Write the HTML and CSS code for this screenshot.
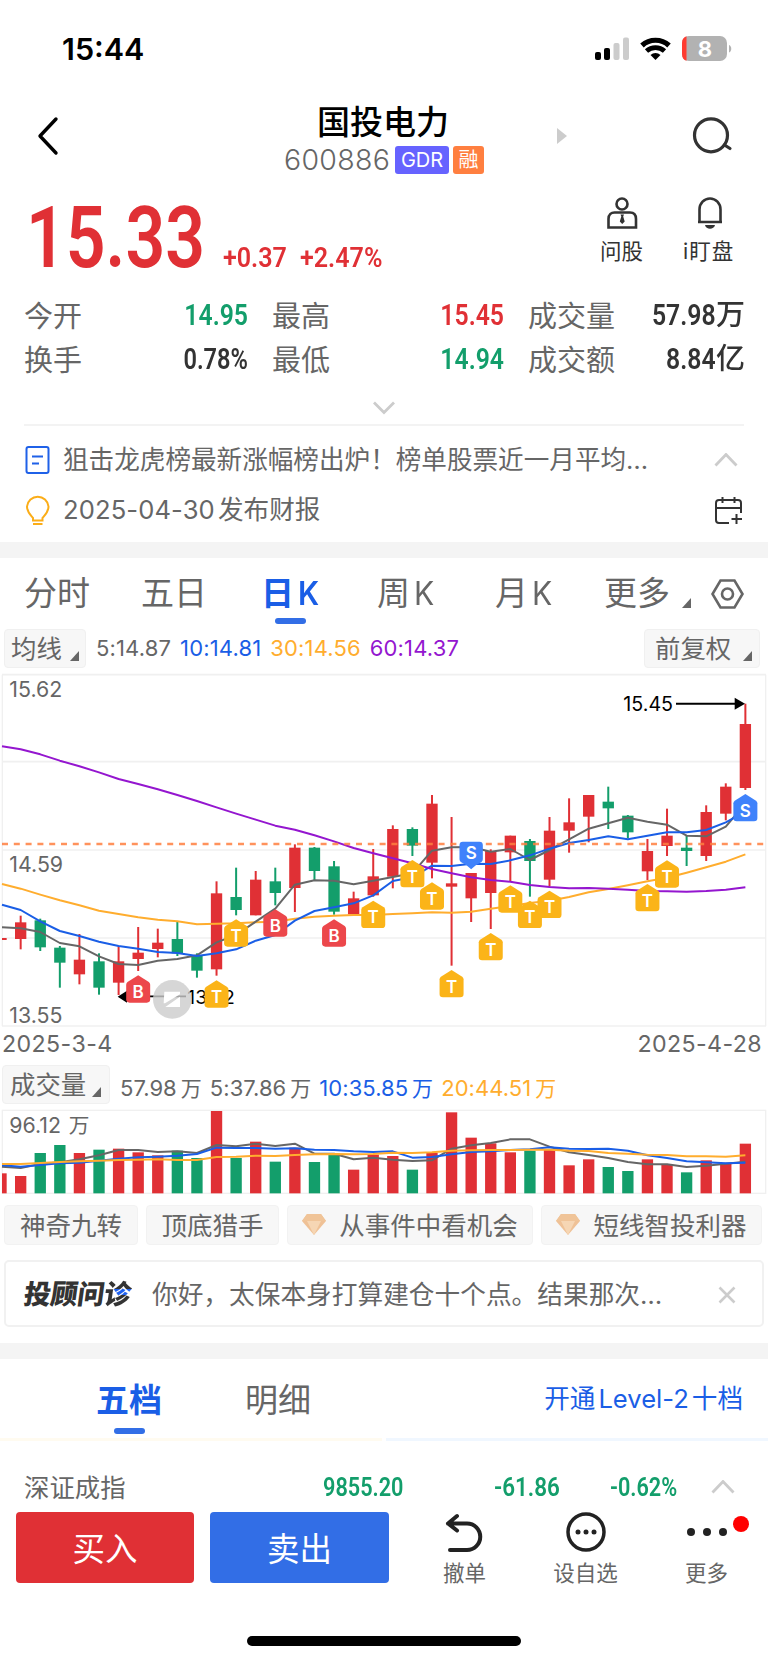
FILE: index.html
```
<!DOCTYPE html>
<html lang="zh-CN">
<head>
    <meta charset="UTF-8">
    <meta name="viewport" content="width=device-width, initial-scale=1.0">
    <title>国投电力 600886</title>
    <link rel="stylesheet" href="styles.css">
</head>
<body>
    <div class="status-bar">
        <span class="clock">15:44</span>
        <svg class="status-icons" width="140" height="44" viewBox="0 0 140 44">
            <rect x="0" y="27" width="6" height="8" rx="2"/>
            <rect x="9" y="23" width="6" height="12" rx="2"/>
            <rect x="18.500" y="18" width="6" height="17" rx="2" fill="#ccc"/>
            <rect x="28" y="12.500" width="6" height="22.500" rx="2" fill="#ccc"/>
            <path d="M47 20.500a20 20 0 0 1 27 0" fill="none" stroke="#000" stroke-width="5.200"/>
            <path d="M51.500 26a13.500 13.500 0 0 1 18 0" fill="none" stroke="#000" stroke-width="4.800"/>
            <path d="M60.500 35l-5-5a7.400 7.400 0 0 1 10 0z"/>
            <rect x="87" y="11" width="45" height="25" rx="7" fill="#b2b2b2"/>
            <path d="M91.500 11.200v24.600C88.500 35 87 32.500 87 29V18c0-3.500 1.500-6 4.500-6.800z" fill="#ff3b30"/>
            <path d="M134 20c3 1 3 6.500 0 7.500z" fill="#b2b2b2"/>
            <text x="110" y="31.500" class="battery-text">8</text>
        </svg>
    </div>

    <header class="header">
        <svg class="back" width="24" height="40" viewBox="0 0 24 40"><path d="M20 3L4 20l16 17"/></svg>
        <div class="stock">
            <h1>国投电力</h1>
            <div class="code-row">
                <span class="code">600886</span>
                <span class="tag gdr">GDR</span>
                <span class="tag rong">融</span>
            </div>
        </div>
        <svg class="next" width="10" height="16" viewBox="0 0 10 16"><path d="M0 0l10 8-10 8z"/></svg>
        <svg class="search" width="44" height="40" viewBox="0 0 44 40"><circle cx="20" cy="20.300" r="16.500"/><path d="M33.500 30l5.500 3.500"/></svg>
    </header>

    <section class="price-row">
        <div class="price"><span class="din">15.33</span></div>
        <div class="change"><span class="din">+0.37</span></div>
        <div class="change-pct"><span class="din">+2.47%</span></div>
        <div class="quick ask">
            <svg width="32" height="34" viewBox="0 0 32 34"><circle cx="16" cy="8" r="5.500"/><path d="M2.500 31.500V23c0-5 3-6.500 6-6.500h15.500c3 0 6 1.500 6 6.500v8.500z"/><path class="solid" d="M14.500 18.500h3.500l-.8 2 1.500 5L16.200 28l-2.400-2.500 1.500-5z"/></svg>
            <span>问股</span>
        </div>
        <div class="quick watch">
            <svg width="32" height="34" viewBox="0 0 32 34"><path d="M6.500 26V13.500a10.500 11 0 0 1 21 0V26zM5 26h24"/><path class="solid" d="M12 29h10c-1 5-9 5-10 0z"/></svg>
            <span>i盯盘</span>
        </div>
    </section>

    <section class="quotes">
        <span class="label">今开</span><b class="din down">14.95</b>
        <span class="label">最高</span><b class="din up">15.45</b>
        <span class="label">成交量</span><b class="din">57.98<i>万</i></b>
        <span class="label">换手</span><b class="din pct">0.78%</b>
        <span class="label">最低</span><b class="din down">14.94</b>
        <span class="label">成交额</span><b class="din">8.84<i>亿</i></b>
    </section>
    <div class="expand">
        <svg class="chevron" width="24" height="14" viewBox="0 0 24 14"><path d="M2 1.500l10 10 10-10"/></svg>
    </div>

    <section class="news">
        <div class="news-row">
            <svg width="26" height="30" viewBox="0 0 26 30"><g fill="none" stroke="#1f61e8" stroke-width="2"><rect x="2.500" y="2" width="22" height="26" rx="2"/><path d="M8 11.500h11M8 18.500h7"/></g></svg>
            <p class="news-text">狙击龙虎榜最新涨幅榜出炉！榜单股票近一月平均…</p>
            <svg class="chevron" width="24" height="14" viewBox="0 0 24 14"><path d="M1.500 12.500l10.500-11 10.500 11"/></svg>
        </div>
        <div class="news-row">
            <svg width="26" height="32" viewBox="0 0 26 32"><g fill="none" stroke="#fbad18" stroke-width="2"><path d="M9 26.500V24c-2.500-3-6-6-6-11.500a10.800 10.800 0 0 1 21.500 0C24.500 18 21 21 18.500 24v2.500zM9 30h9.500"/></g></svg>
            <p class="news-text"><span class="date">2025-04-30</span> 发布财报</p>
            <svg width="30" height="30" viewBox="0 0 30 30"><g fill="none" stroke="#333" stroke-width="2"><path d="M15 28H5a3 3 0 0 1-3-3V8a3 3 0 0 1 3-3h19a3 3 0 0 1 3 3v10M2 13h25M8.500 2v6M20.500 2v6M22.500 19v10M17.500 24h10.500"/></g></svg>
        </div>
    </section>
    <div class="band"></div>

    <nav class="periods">
        <span>分时</span>
        <span>五日</span>
        <span class="active">日<i>K</i></span>
        <span>周<i>K</i></span>
        <span>月<i>K</i></span>
        <span class="more">更多</span>
        <svg width="36" height="32" viewBox="0 0 36 32"><g fill="none" stroke="#666" stroke-width="2.600"><path d="M9.500 2.500h14L31.500 16l-8 13.500h-14L1.500 16z"/><circle cx="16.500" cy="16" r="5.500"/></g></svg>
    </nav>

    <section class="indicator">
        <span class="select ma">均线</span>
        <div class="values">
            <span>5:14.87</span><span class="blue">10:14.81</span><span class="orange">30:14.56</span><span class="purple">60:14.37</span>
        </div>
        <span class="select adjust">前复权</span>
    </section>

    <svg id="kline" class="kline" viewBox="0 0 2304 1080"></svg>
    <div class="dates"><span>2025-3-4</span><span>2025-4-28</span></div>

    <section class="indicator volume">
        <span class="select vol">成交量</span>
        <div class="values">
            <span>57.98<i>万</i></span><span>5:37.86<i>万</i></span><span class="blue">10:35.85<i>万</i></span><span class="orange">20:44.51<i>万</i></span>
        </div>
    </section>
    <svg id="volume" class="volume-chart" viewBox="0 234 2304 264"></svg>

    <section class="chips">
        <span class="chip">神奇九转</span>
        <span class="chip">顶底猎手</span>
        <span class="chip gem">
            <svg width="24" height="22" viewBox="0 0 24 22"><path d="M5 1h14l5 7-12 14L0 8z" fill="#efc196"/><path d="M5 1h14l5 7H0z" fill="#f0c498"/><path d="M5 8h14l-7 14z" fill="#f6d6b4"/></svg>
            从事件中看机会
        </span>
        <span class="chip gem">
            <svg width="24" height="22" viewBox="0 0 24 22"><path d="M5 1h14l5 7-12 14L0 8z" fill="#efc196"/><path d="M5 1h14l5 7H0z" fill="#f0c498"/><path d="M5 8h14l-7 14z" fill="#f6d6b4"/></svg>
            短线智投利器
        </span>
    </section>

    <section class="advisor">
        <strong>投顾问<em>诊</em></strong>
        <p>你好，太保本身打算建仓十个点。结果那次…</p>
        <svg width="18" height="18" viewBox="0 0 18 18"><path d="M1.500 1.500l15 15M16.500 1.500l-15 15"/></svg>
    </section>
    <div class="band"></div>

    <nav class="depth-tabs">
        <span class="active">五档</span>
        <span>明细</span>
        <a>开通<span>Level-2</span>十档</a>
    </nav>
    <div class="depth-line"><span class="buy"></span><span class="sell"></span></div>

    <section class="index-row">
        <span class="index-name">深证成指</span>
        <span class="din v1">9855.20</span>
        <span class="din v2">-61.86</span>
        <span class="din v3">-0.62%</span>
        <svg class="chevron" width="24" height="14" viewBox="0 0 24 14"><path d="M1.500 12.500l10.500-11 10.500 11"/></svg>
    </section>

    <footer class="actions">
        <button class="buy-btn">买入</button>
        <button class="sell-btn">卖出</button>
        <div class="action">
            <svg width="44" height="42" viewBox="0 0 44 42"><g fill="none" stroke="#222" stroke-width="4" stroke-linecap="round" stroke-linejoin="round"><path d="M14 5L5 12.500l9 7M5 12.500h19a13 13 0 0 1 0 26.500H7"/></g></svg>
            <span>撤单</span>
        </div>
        <div class="action">
            <svg width="44" height="42" viewBox="0 0 44 42"><circle cx="22" cy="21" r="18" fill="none" stroke="#222" stroke-width="3.500"/><g fill="#222"><circle cx="14" cy="21" r="2.500"/><circle cx="22" cy="21" r="2.500"/><circle cx="30" cy="21" r="2.500"/></g></svg>
            <span>设自选</span>
        </div>
        <div class="action">
            <svg width="44" height="42" viewBox="0 0 44 42"><g fill="#222"><circle cx="6" cy="21" r="4"/><circle cx="22" cy="21" r="4"/><circle cx="38" cy="21" r="4"/></g></svg>
            <span>更多</span>
            <i class="dot"></i>
        </div>
    </footer>
    <div class="home-indicator"></div>

    <script src="chart.js"></script>
</body>
</html>
```
FILE: styles.css
```
* {
    box-sizing: border-box;
}
body {
    margin: 0;
    width: 768px;
    height: 1663px;
    overflow: hidden;
    background: #fff;
    color: #666;
    font-family: Inter, "Noto Sans CJK SC", sans-serif;
    font-size: 25.400px;
    line-height: 1;
}
h1, p {
    margin: 0;
    font-weight: 400;
}
i {
    font-style: normal;
}
svg {
    display: block;
    flex: none;
}
.up {
    color: #e03035;
}
.down {
    color: #139e6b;
}
.blue {
    color: #1a5ee6;
}
.orange {
    color: #ffad2e;
}
.purple {
    color: #9416cf;
}
/* narrow bold figures */
.din {
    display: inline-block;
    font-family: Roboto, "Noto Sans CJK SC", sans-serif;
    font-weight: 600;
    white-space: nowrap;
    transform: scaleX(.84);
    transform-origin: left center;
}
.chevron path {
    fill: none;
    stroke: #ccc;
    stroke-width: 2.8;
}

/* status bar */
.status-bar {
    display: flex;
    justify-content: space-between;
    height: 90px;
    padding: 25px 33px 0 62px;
}
.clock {
    margin-top: 8px;
    font-size: 30.500px;
    font-weight: 600;
    line-height: 31px;
    color: #000;
}
.battery-text {
    font-size: 22px;
    font-weight: 700;
    text-anchor: middle;
    fill: #fff;
}

/* header */
.header {
    display: grid;
    grid-template-columns: 60px 449px 48px 10px 1fr;
    height: 100px;
}
.back {
    margin: 26px 0 0 36px;
}
.back path {
    fill: none;
    stroke: #000;
    stroke-width: 3.4;
    stroke-linecap: round;
    stroke-linejoin: round;
}
.stock {
    grid-column: 2 / 4;
    padding-left: 224px;
}
.stock h1 {
    width: 200px;
    margin-left: 33px;
    padding-top: 12px;
    font-size: 33px;
    line-height: 40px;
    font-weight: 500;
    color: #000;
}
.code-row {
    display: flex;
    align-items: center;
    height: 36px;
    margin-top: -1px;
    padding-top: 2px;
}
.code {
    width: 111px;
    font-size: 28.500px;
    font-weight: 300;
    letter-spacing: .3px;
}
.tag {
    height: 28px;
    border-radius: 3px;
    color: #fff;
    font-size: 20px;
    line-height: 28px;
    text-align: center;
}
.gdr {
    width: 54px;
    background: #6663ff;
    font-weight: 400;
}
.rong {
    width: 31px;
    margin-left: 4px;
    background: #ff7f40;
}
.next {
    margin-top: 38px;
    fill: #ccc;
}
.search {
    margin: 25px 0 0 124px;
    fill: none;
    stroke: #333;
    stroke-width: 3.2;
    stroke-linecap: round;
}

/* price */
.price-row {
    display: flex;
    height: 100px;
}
.price {
    width: 192px;
    margin-left: 26px;
    padding-top: 3px;
    font-size: 86px;
    color: #e03035;
}
.price .din {
    transform: scaleX(.81);
}
.change, .change-pct {
    width: 77px;
    padding-top: 53px;
    font-size: 28.500px;
    color: #e03035;
}
.change {
    margin-left: 5px;
}
.change .din, .change-pct .din {
    transform: scaleX(.88);
}
.change-pct {
    width: 300px;
}
.quick {
    width: 44px;
    padding-top: 6px;
    font-size: 21.500px;
    line-height: 28px;
    color: #333;
    white-space: nowrap;
}
.quick svg {
    margin: 0 auto;
    fill: none;
    stroke: #333;
    stroke-width: 2.6;
}
.quick .solid {
    fill: #333;
    stroke: none;
}
.quick span {
    display: block;
    margin-top: 7px;
}
.watch {
    width: 52px;
    margin-left: 39px;
}
.watch span {
    letter-spacing: 1px;
}

/* quotes */
.quotes {
    display: grid;
    grid-template-columns: 90px 133px 116px 140px 116px 125px;
    grid-template-rows: 44px 44px;
    align-items: center;
    height: 98px;
    padding: 4px 24px 0;
}
.quotes .label {
    font-size: 29px;
}
.quotes .label:nth-of-type(3n+2), .quotes .label:nth-of-type(3n) {
    padding-left: 25px;
    white-space: nowrap;
}
.quotes .din {
    margin-right: -1px;
    font-size: 29.500px;
    text-align: right;
    transform-origin: right center;
}
.quotes .pct {
    transform: scaleX(.8);
}
.quotes .din:not(.up):not(.down) {
    color: #333;
}
.quotes .din i {
    display: inline-block;
    margin-left: 6px;
    font-size: 29px;
    font-weight: 500;
    line-height: 1;
    transform: scaleX(1.19);
    transform-origin: right center;
}
.expand {
    height: 38px;
    margin: 0 24px;
    padding-top: 13px;
    border-bottom: 2px solid #f3f3f3;
}
.expand svg {
    margin: 0 auto;
}

/* news */
.news {
    height: 116px;
    padding: 9px 24px 0;
}
.news-row {
    display: flex;
    align-items: center;
    height: 50px;
}
.news-text {
    flex: 1;
    margin-left: 13px;
    font-size: 25.600px;
    white-space: nowrap;
}
.news-row .chevron {
    margin-right: 6px;
}
.date {
    margin-right: -4px;
    letter-spacing: .1px;
}
.band {
    height: 16px;
    background: #f4f4f4;
}

/* period tabs */
.periods {
    display: grid;
    grid-template-columns: 117px 123px 113px 118px 109px 107px 36px;
    align-items: center;
    height: 70px;
    padding: 1px 0 0 24px;
    font-size: 33px;
    white-space: nowrap;
}
.periods i {
    display: inline-block;
    margin-left: 4px;
    font-size: 32px;
    transform: scaleX(.94);
    transform-origin: left center;
}
.periods .active {
    position: relative;
    left: -3px;
    color: #1a5ee6;
    font-weight: 600;
}
.active::after {
    content: "";
    position: absolute;
    left: 50%;
    bottom: -14px;
    width: 31px;
    height: 6px;
    margin-left: -16px;
    border-radius: 3px;
    background: #326ee6;
}
.periods .active::after {
    left: 30px;
}
.more::after, .select::after {
    content: "";
    display: inline-block;
    margin-left: 12px;
    border-left: 9px solid transparent;
    border-bottom: 10px solid #666;
    vertical-align: -3px;
}

/* indicator rows */
.indicator {
    display: flex;
    height: 42px;
    padding: 1px 8px 0 4px;
}
.select {
    height: 39px;
    padding-left: 6px;
    border: 1px solid #f0f0f0;
    border-radius: 4px;
    background: #f7f7f7;
    line-height: 38px;
    white-space: nowrap;
}
.select::after {
    margin-left: 8px;
    vertical-align: -3px;
}
.ma {
    width: 82px;
}
.values {
    display: flex;
    flex: 1;
    gap: 9px;
    padding-left: 10px;
    font-size: 22px;
    line-height: 39px;
    letter-spacing: .15px;
    white-space: nowrap;
}
.adjust {
    width: 116px;
    padding-left: 10px;
}
.adjust::after {
    margin-left: 12px;
}
.kline {
    width: 768px;
    height: 360px;
}
.volume-chart {
    width: 768px;
    height: 88px;
}
.dates {
    display: flex;
    justify-content: space-between;
    height: 34px;
    padding: 1px 6px 0 2px;
    font-size: 23.200px;
    line-height: 26px;
    letter-spacing: .4px;
}
.volume {
    height: 44px;
    padding-left: 2px;
}
.vol {
    width: 108px;
    padding-left: 7px;
}
.vol::after {
    margin-left: 6px;
}
.volume .values {
    gap: 8px;
    padding-left: 10px;
    line-height: 46px;
    letter-spacing: .05px;
}
.volume i {
    margin-left: 4px;
    font-size: 21px;
}

/* chips */
.chips {
    display: grid;
    grid-template-columns: 134px 133px 246px 221px;
    justify-content: start;
    column-gap: 8px;
    height: 64px;
    padding: 9px 0 0 4px;
}
.chip {
    display: flex;
    align-items: center;
    justify-content: center;
    height: 40px;
    padding-top: 1px;
    border: 1px solid #f2f2f2;
    border-radius: 4px;
    background: #f7f7f7;
    font-size: 25.500px;
    white-space: nowrap;
}
.gem svg {
    margin: -3px 13px 0 0;
}

/* advisor */
.advisor {
    display: flex;
    align-items: center;
    height: 67px;
    margin: 0 4px 16px;
    padding: 2px 26px 0 18px;
    border: 2px solid #f1f1f1;
    border-radius: 5px;
}
.advisor strong {
    width: 128px;
    font-size: 27px;
    font-weight: 900;
    color: #333;
    letter-spacing: -.2px;
    transform: skewX(-8deg);
    white-space: nowrap;
}
.advisor em {
    font-style: normal;
    background: linear-gradient(100deg, #333 35%, #1f61f0 35%) 0 11px / 100% 6px no-repeat, linear-gradient(#333 11px, transparent 11px, transparent 17px, #333 17px);
    -webkit-background-clip: text;
    background-clip: text;
    color: transparent;
}
.advisor p {
    flex: 1;
    font-size: 25.700px;
    white-space: nowrap;
}
.advisor svg {
    stroke: #ccc;
    stroke-width: 2.6;
}

/* order book */
.depth-tabs {
    display: flex;
    align-items: center;
    height: 79px;
    padding: 3px 25px 0 96px;
}
.depth-tabs > span {
    position: relative;
    width: 149px;
    font-size: 33px;
}
.depth-tabs .active {
    color: #1a5ee6;
    font-weight: 700;
}
.depth-tabs .active::after {
    left: 34px;
    bottom: -17px;
}
.depth-tabs a {
    margin: -2px 0 0 auto;
    font-size: 25.600px;
    color: #1a5ee6;
}
.depth-tabs a span {
    margin: 0 3px;
}
.depth-line {
    display: flex;
    gap: 4px;
    height: 3px;
}
.buy {
    width: 382px;
    background: #fffbf0;
}
.sell {
    flex: 1;
    background: #f0f7ff;
}
.index-row {
    display: grid;
    grid-template-columns: 299px 171px 116px 101px 24px;
    align-items: center;
    height: 71px;
    padding: 22px 0 0 24px;
    color: #139e6b;
}
.index-row .din {
    font-size: 25.800px;
}
.index-row .v2 {
    transform: scaleX(.87);
}
.index-row .chevron {
    margin-top: -2px;
}
.index-name {
    color: #666;
}

/* bottom actions */
.actions {
    display: flex;
    height: 124px;
    padding-left: 16px;
}
.actions button {
    width: 178px;
    height: 71px;
    margin-right: 16px;
    padding: 0 0 3px;
    border: none;
    border-radius: 4px;
    background: #e03035;
    color: #fff;
    font-family: inherit;
    font-size: 32.500px;
}
.actions .sell-btn {
    width: 179px;
    margin-right: 15px;
    background: #326ee6;
}
.action {
    position: relative;
    width: 121px;
    font-size: 21.500px;
    text-align: center;
}
.action svg {
    margin: -1px auto 10px;
}
.dot {
    position: absolute;
    top: 4px;
    right: 18px;
    width: 16px;
    height: 16px;
    border-radius: 50%;
    background: #f00;
}
.home-indicator {
    width: 274px;
    height: 10px;
    margin-left: 247px;
    border-radius: 5px;
    background: #000;
}
```
FILE: chart.js
```
const RED = '#e03035';
const GREEN = '#139e6b';
const GRAY = '#666';
const BLUE = '#1a5ee6';
const ORANGE = '#ffad2e';
const PURPLE = '#9416cf';

// x of the n-th trading day
const dayX = (i) => 62 + 58.76 * i;

// [color, high, body top, body bottom, low, volume top]
const days = [
    ['r', 737, 757, 807, 838, 438], ['g', 746, 751, 832, 843, 369], ['g', 828, 833, 878, 953, 345],
    ['r', 792, 869, 913, 943, 369], ['g', 850, 874, 953, 974, 359], ['r', 829, 874, 938, 975, 356],
    ['r', 771, 848, 867, 903, 367], ['r', 776, 818, 837, 862, 376], ['g', 755, 807, 850, 858, 362],
    ['g', 850, 857, 902, 923, 384], ['r', 634, 670, 898, 917, 243], ['g', 593, 681, 720, 736, 384],
    ['r', 603, 629, 736, 736, 335], ['g', 593, 634, 669, 706, 395], ['r', 523, 533, 654, 726, 353],
    ['g', 531, 533, 603, 630, 396], ['g', 573, 589, 725, 734, 371], ['r', 665, 685, 733, 733, 419],
    ['r', 537, 619, 676, 680, 374], ['r', 466, 477, 620, 655, 378], ['g', 472, 477, 527, 558, 419],
    ['r', 375, 401, 578, 625, 368], ['r', 441, 640, 650, 887, 247], ['r', 609, 609, 685, 756, 323],
    ['r', 538, 543, 669, 777, 340], ['r', 497, 497, 547, 635, 367], ['g', 507, 513, 573, 680, 362],
    ['r', 441, 482, 629, 650, 359], ['r', 385, 457, 482, 548, 406], ['r', 375, 375, 440, 517, 388],
    ['g', 350, 395, 415, 477, 411], ['g', 435, 437, 487, 505, 423], ['r', 507, 543, 604, 630, 388],
    ['r', 416, 497, 528, 558, 404], ['g', 497, 533, 543, 588, 427], ['r', 406, 426, 558, 573, 391],
    ['r', 340, 350, 431, 451, 402], ['r', 101, 162, 354, 360, 341]
];

// the first value of each line sits on the left edge
const ma = [
    [ORANGE, [642, 656, 674, 691, 706, 722, 732, 742, 749, 754, 763, 761, 760, 757, 755, 746, 740, 737, 735, 735, 732, 730, 727, 728, 725, 716, 708, 699, 692, 681, 667, 657, 646, 634, 623, 608, 592, 575, 553]],
    [GRAY, [772, 775, 786, 819, 829, 859, 882, 885, 872, 867, 856, 817, 795, 755, 716, 644, 631, 632, 643, 632, 621, 610, 542, 532, 531, 545, 537, 570, 540, 508, 476, 460, 443, 455, 464, 497, 499, 470, 400]],
    [BLUE, [704, 720, 754, 783, 798, 815, 828, 836, 846, 849, 858, 850, 838, 812, 795, 752, 723, 712, 700, 676, 633, 622, 587, 588, 581, 582, 571, 556, 536, 519, 510, 499, 508, 497, 487, 487, 480, 457, 425]],
    [PURPLE, [229, 238, 253, 272, 289, 307, 327, 342, 358, 375, 393, 412, 431, 449, 467, 479, 496, 514, 534, 550, 565, 580, 597, 610, 622, 630, 635, 645, 651, 655, 654, 656, 659, 663, 664, 665, 663, 659, 652]]
];
const volumeMa = [
    [GRAY, [410, 414, 402, 397, 388, 376, 360, 360, 366, 364, 369, 345, 349, 341, 348, 341, 371, 371, 388, 383, 389, 393, 391, 356, 346, 339, 328, 328, 350, 367, 375, 384, 396, 403, 403, 411, 407, 401, 395]],
    [BLUE, [406, 410, 405, 400, 398, 392, 386, 382, 380, 377, 372, 353, 354, 354, 356, 355, 359, 360, 364, 366, 364, 383, 381, 373, 366, 364, 360, 358, 352, 356, 357, 356, 362, 376, 384, 394, 397, 400, 398]],
    [ORANGE, [402, 402, 399, 396, 394, 392, 390, 389, 388, 390, 390, 381, 380, 377, 378, 375, 373, 372, 373, 372, 368, 369, 367, 362, 361, 360, 360, 359, 359, 362, 363, 369, 371, 374, 375, 379, 379, 380, 376]]
];

// [letter, day, top]
const marks = [
    ['B', 6, 916], ['T', 10, 931], ['T', 11, 748], ['B', 13, 718], ['B', 16, 748], ['T', 18, 692],
    ['T', 20, 570], ['T', 21, 637], ['T', 22, 900], ['T', 24, 789], ['T', 25, 646], ['T', 26, 692],
    ['T', 27, 662], ['T', 32, 642], ['T', 33, 571], ['S', 37, 372]
];
const markColor = { B: '#ec474b', T: '#fbb418', S: '#3f82fb' };

function line(x1, y1, x2, y2, color, width, extra = '') {
    return `<path d="M${x1} ${y1}L${x2} ${y2}" stroke="${color}" stroke-width="${width}" ${extra}/>`;
}

function rect(x, y, w, h, color) {
    return `<rect x="${x}" y="${y}" width="${w}" height="${h}" fill="${color}"/>`;
}

function curve([color, ys]) {
    const points = ys.map((y, i) => `${i === 0 ? 6 : dayX(i - 1)},${y}`).join(' ');
    return `<polyline points="${points}" fill="none" stroke="${color}" stroke-width="6" stroke-linejoin="round"/>`;
}

function text(x, y, value, size, color, extra = '') {
    return `<text x="${x}" y="${y}" font-size="${size}" fill="${color}" ${extra}>${value}</text>`;
}

function mark([letter, day, top]) {
    const x = dayX(day);
    const shape = `M${x} ${top}l32 20q4 3 4 8v44q0 10-10 10h-52q-10 0-10-10v-44q0-5 4-8z`;
    return `<path d="${shape}" fill="${markColor[letter]}"/>` +
        text(x, top + 68, letter, 51, '#fff', 'text-anchor="middle" font-weight="600"');
}

function drawKline() {
    let out = '';
    [14, 275, 540, 804, 1068].forEach((y) => { out += line(6, y, 2298, y, '#f0f0f0', 5); });
    out += line(7, 14, 7, 1068, '#f0f0f0', 4) + line(2297, 14, 2297, 1068, '#f0f0f0', 4);
    out += rect(6, 804, 14, 6, RED);
    days.forEach(([c, high, top, bottom, low], i) => {
        const color = c === 'r' ? RED : GREEN;
        out += rect(dayX(i) - 3, high, 6, low - high, color);
        out += rect(dayX(i) - 17, top, 34, bottom - top, color);
    });
    out += ma.map(curve).join('');
    out += line(6, 522, 2296, 522, '#ff7f40', 7, 'stroke-dasharray="18 17.400" opacity=".85"');

    out += text(28, 80, '15.62', 64, GRAY) + text(28, 607, '14.59', 64, GRAY) + text(28, 1058, '13.55', 64, GRAY);
    out += text(1870, 123, '15.45', 59, '#000');
    out += line(2028, 101, 2210, 101, '#000', 6) + '<path d="M2235 101l-31-18v36z"/>';
    out += text(562, 1002, '13.72', 58, '#000');
    out += line(370, 979, 558, 979, '#000', 5) + '<path d="M353 980l28-18v36z"/>';
    out += '<circle cx="517" cy="988" r="58" fill="#ccc" opacity=".8"/>';
    out += '<path d="M493 965h47v8l-45 27h-4zM540 980v31h-44z" fill="#fff"/>';
    out += marks.map(mark).join('');

    // sell mark above the candle, pointing down
    const x = dayX(23);
    out += `<path d="M${x - 25} 515h50q10 0 10 10v43q0 5-4 8l-17 10-14 12-14-12-17-10q-4-3-4-8v-43q0-10 10-10z" fill="${markColor.S}"/>`;
    out += text(x, 567, 'S', 51, '#fff', 'text-anchor="middle" font-weight="600"');
    document.getElementById('kline').innerHTML = out;
}

function drawVolume() {
    let out = `<rect x="7" y="241" width="2290" height="249" fill="none" stroke="#f0f0f0" stroke-width="4"/>`;
    out += rect(6, 430, 14, 60, RED);
    days.forEach(([c, , , , , top], i) => {
        out += rect(dayX(i) - 17, top, 34, 490 - top, c === 'r' ? RED : GREEN);
    });
    out += volumeMa.map(curve).join('');
    out += text(28, 309, '96.12', 64, GRAY) + text(206, 309, '万', 62, GRAY);
    document.getElementById('volume').innerHTML = out;
}

drawKline();
drawVolume();
```
